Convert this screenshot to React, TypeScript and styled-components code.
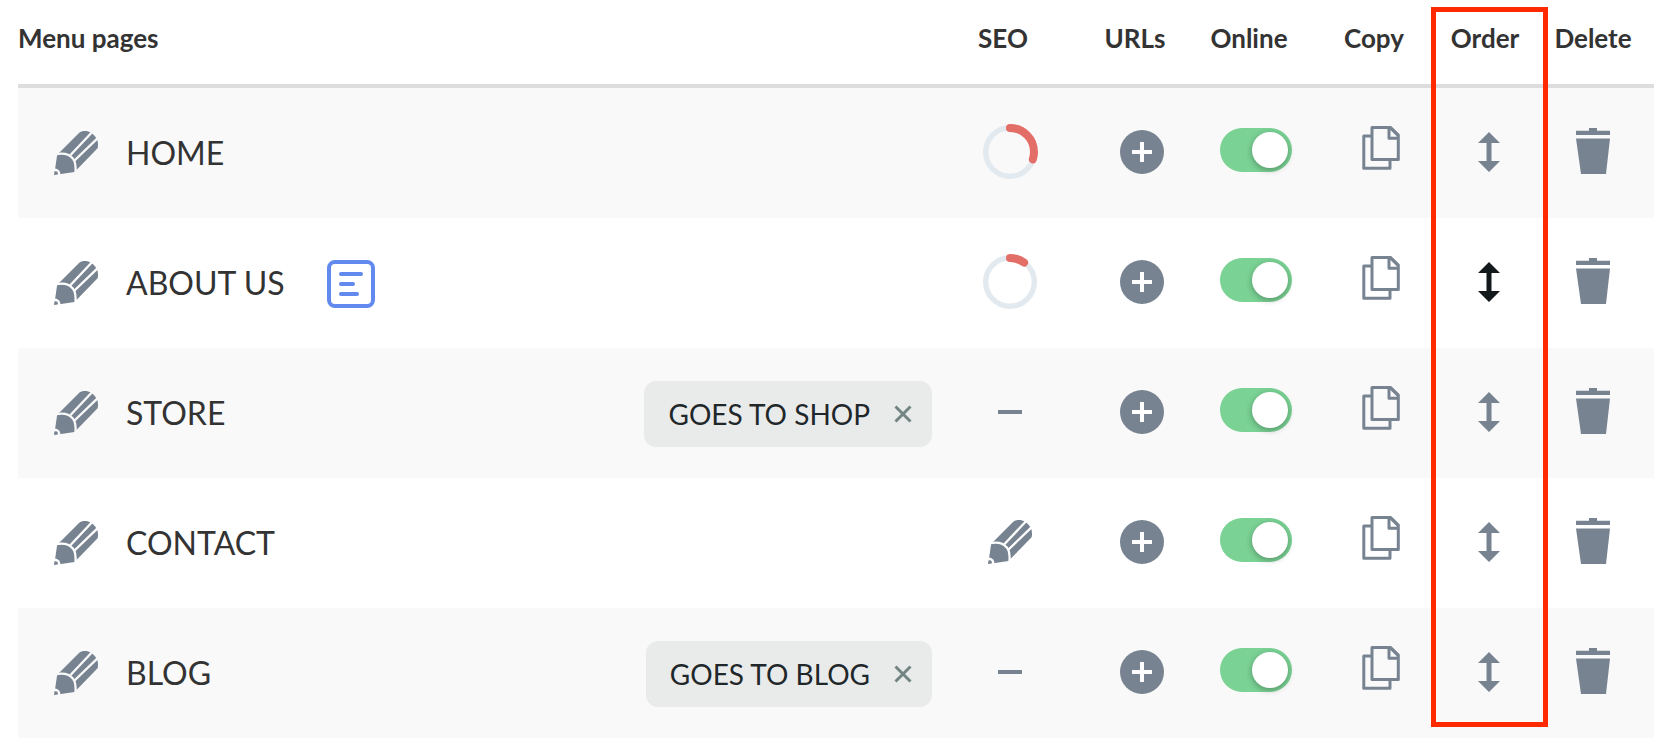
import React, { useId } from "react";
import styled, { createGlobalStyle } from "styled-components";

const GlobalStyle = createGlobalStyle`
  *, *::before, *::after { box-sizing: border-box; }
  body {
    margin: 0;
    background: #fff;
    color: #333;
    font-family: Lato, "Open Sans", sans-serif;
  }
`;

const SLATE = "#788391";

const Page = styled.main`
  padding: 0 16px 18px 18px;
`;

const TableWrap = styled.div`
  position: relative;
`;

const Table = styled.table`
  width: 100%;
  table-layout: fixed;
  border-collapse: separate;
  border-spacing: 0;
`;

const Col = styled.col<{ $width?: number }>`
  width: ${(p) => (p.$width ? `${p.$width}px` : "auto")};
`;

const HeadCell = styled.th<{ $align?: "left" | "center"; $inset?: number }>`
  height: 88px;
  padding: 0 ${(p) => p.$inset ?? 0}px 8px 0;
  border-bottom: 4px solid #ddd;
  font-size: 26px;
  line-height: 32px;
  font-weight: 700;
  text-align: ${(p) => p.$align ?? "center"};
  white-space: nowrap;
`;

const Row = styled.tr`
  &:nth-child(odd) {
    background: #f9f9f9;
  }
`;

const NameCell = styled.td`
  height: 130px;
  padding: 0 0 0 36px;
`;

const NameLine = styled.div`
  display: flex;
  align-items: center;
`;

const PageName = styled.span`
  margin-left: 28px;
  font-size: 32px;
  line-height: 40px;
  white-space: nowrap;
`;

const PageType = styled.span`
  display: flex;
  margin: 2px 0 0 42px;
`;

const Tag = styled.span`
  display: flex;
  align-items: center;
  gap: 24px;
  height: 66px;
  margin: 2px 0 0 auto;
  padding: 0 20px 0 24px;
  border-radius: 12px;
  background: #e9ebea;
  color: #1f272b;
  font-size: 28px;
  line-height: 36px;
  white-space: nowrap;
`;

const ControlCell = styled.td<{ $lift?: number }>`
  padding: 0 0 ${(p) => p.$lift ?? 2}px;
  vertical-align: middle;
`;

const Centered = styled.div`
  display: flex;
  justify-content: center;
`;

const IconButton = styled.button<{ $tone?: string }>`
  display: flex;
  flex: none;
  padding: 0;
  border: 0;
  background: none;
  color: ${(p) => p.$tone ?? SLATE};
  cursor: pointer;
`;

const Switch = styled.input`
  appearance: none;
  display: flex;
  align-items: center;
  width: 72px;
  height: 44px;
  margin: 0;
  padding: 4px;
  border-radius: 22px;
  background: #ccd2d8;
  cursor: pointer;

  &::before {
    content: "";
    width: 36px;
    height: 36px;
    border-radius: 50%;
    background: #fff;
    box-shadow: 0 2px 6px rgba(0, 0, 0, 0.3);
  }

  &:checked {
    justify-content: flex-end;
    background: #7ad294;
  }
`;

const Dash = styled.div`
  width: 24px;
  height: 4px;
  background: ${SLATE};
`;

const ColumnHighlight = styled.div`
  position: absolute;
  top: 7px;
  right: 106px;
  bottom: 11px;
  width: 117px;
  border: 5px solid #ff2a00;
  pointer-events: none;
`;

function PencilIcon() {
  const id = useId();
  return (
    <svg width="44" height="44" viewBox="0 0 44 44" aria-hidden="true">
      <mask id={id} maskUnits="userSpaceOnUse" x="0" y="0" width="44" height="44">
        <rect width="44" height="44" fill="#fff" />
        <g fill="none" stroke="#000" strokeWidth="2.3">
          <path d="M2 23.2 C10 21.6 15.6 23.6 18.8 27.4 C21.6 31 22.2 35 21.4 43" />
          <path d="M16.3 24.3 L38 1.2" />
          <path d="M20 30 L44.5 6.3" />
        </g>
        <circle cx="1" cy="43" r="5.4" fill="#000" />
      </mask>
      <path
        mask={`url(#${id})`}
        fill="currentColor"
        d="M0.5 42 L3.2 23.5 L5.5 21.4 L25 2 C28 -0.6 33.5 -0.5 37 1.7 C40 3.6 42 6 43.3 9 C44.2 12 44.2 15 43.6 17.3 L22 39.4 L20.5 41 L2 43.8 Z"
      />
      <path fill="currentColor" d="M0 44 L0.4 40.6 Q2 39.6 3.3 40.8 Q4.4 42.2 3.7 43.6 Z" />
    </svg>
  );
}

function TextPageIcon() {
  return (
    <svg width="48" height="48" viewBox="0 0 48 48" fill="none" stroke="#6289ee" strokeWidth="4" strokeLinecap="round" aria-hidden="true">
      <rect x="2" y="2" width="44" height="44" rx="6" />
      <path d="M14 14H34M14 24H26M14 34H30" />
    </svg>
  );
}

function ScoreRing({ percent }: { percent: number }) {
  return (
    <svg width="56" height="56" viewBox="0 0 56 56" fill="none" role="img" aria-label={`SEO score ${percent}%`}>
      <circle cx="28" cy="28" r="24.3" stroke="#e2e9ef" strokeWidth="5.4" />
      <circle
        cx="28"
        cy="28"
        r="24"
        stroke="#e36d67"
        strokeWidth="8"
        strokeLinecap="round"
        pathLength="100"
        strokeDasharray={`${percent} 100`}
        transform="rotate(-90 28 28)"
      />
    </svg>
  );
}

function PlusIcon() {
  return (
    <svg width="44" height="44" viewBox="0 0 44 44" aria-hidden="true">
      <circle cx="22" cy="22" r="22" fill="currentColor" />
      <path d="M22 12V32M12 22H32" stroke="#fff" strokeWidth="4" />
    </svg>
  );
}

function CopyIcon() {
  return (
    <svg width="38" height="44" viewBox="0 0 38 44" fill="none" stroke="currentColor" strokeWidth="3" strokeLinejoin="round" aria-hidden="true">
      <path d="M9.5 10H1.8V42.3H28V34.5" />
      <path d="M10 1.5H28.6L36.3 9V33.4H10Z" />
      <path d="M27 1.5V12.2H36.3" />
      <path d="M28 1.5L36.3 9.8" />
    </svg>
  );
}

function MoveIcon() {
  return (
    <svg width="22" height="40" viewBox="0 0 22 40" fill="currentColor" aria-hidden="true">
      <path d="M11 0L22 11H13.5V29H22L11 40L0 29H8.5V11H0Z" />
    </svg>
  );
}

function TrashIcon() {
  return (
    <svg width="34" height="46" viewBox="0 0 34 46" fill="currentColor" aria-hidden="true">
      <path d="M0 2.7H13V0H21V2.7H34V7H0Z" />
      <path d="M0 10.4H34L30 46H5Z" />
    </svg>
  );
}

function CloseIcon() {
  return (
    <svg width="18" height="18" viewBox="0 0 18 18" stroke="currentColor" strokeWidth="3" aria-hidden="true">
      <path d="M1.5 1.5L16.5 16.5M16.5 1.5L1.5 16.5" />
    </svg>
  );
}

type Seo = number | "none" | "edit";

interface MenuPage {
  name: string;
  seo: Seo;
  target?: string;
  isText?: boolean;
  moving?: boolean;
}

const pages: MenuPage[] = [
  { name: "HOME", seo: 30 },
  { name: "ABOUT US", seo: 10, isText: true, moving: true },
  { name: "STORE", seo: "none", target: "GOES TO SHOP" },
  { name: "CONTACT", seo: "edit" },
  { name: "BLOG", seo: "none", target: "GOES TO BLOG" },
];

function SeoStatus({ seo, name }: { seo: Seo; name: string }) {
  if (seo === "none") return <Dash />;
  if (seo === "edit") {
    return (
      <IconButton aria-label={`Edit SEO of ${name}`}>
        <PencilIcon />
      </IconButton>
    );
  }
  return <ScoreRing percent={seo} />;
}

function PageRow({ page }: { page: MenuPage }) {
  const { name } = page;
  return (
    <Row>
      <NameCell>
        <NameLine>
          <IconButton aria-label={`Edit ${name}`}>
            <PencilIcon />
          </IconButton>
          <PageName>{name}</PageName>
          {page.isText && (
            <PageType>
              <TextPageIcon />
            </PageType>
          )}
          {page.target && (
            <Tag>
              {page.target}
              <IconButton $tone="#728583" aria-label={`Remove ${page.target}`}>
                <CloseIcon />
              </IconButton>
            </Tag>
          )}
        </NameLine>
      </NameCell>
      <ControlCell>
        <Centered>
          <SeoStatus seo={page.seo} name={name} />
        </Centered>
      </ControlCell>
      <ControlCell>
        <Centered>
          <IconButton aria-label={`Add URL to ${name}`}>
            <PlusIcon />
          </IconButton>
        </Centered>
      </ControlCell>
      <ControlCell $lift={6}>
        <Centered>
          <Switch type="checkbox" defaultChecked aria-label={`${name} online`} />
        </Centered>
      </ControlCell>
      <ControlCell $lift={10}>
        <Centered>
          <IconButton aria-label={`Copy ${name}`}>
            <CopyIcon />
          </IconButton>
        </Centered>
      </ControlCell>
      <ControlCell>
        <Centered>
          <IconButton $tone={page.moving ? "#13181b" : SLATE} aria-label={`Move ${name}`}>
            <MoveIcon />
          </IconButton>
        </Centered>
      </ControlCell>
      <ControlCell $lift={4}>
        <Centered>
          <IconButton aria-label={`Delete ${name}`}>
            <TrashIcon />
          </IconButton>
        </Centered>
      </ControlCell>
    </Row>
  );
}

export default function App() {
  return (
    <Page>
      <GlobalStyle />
      <TableWrap>
        <Table>
          <colgroup>
            <Col />
            <Col $width={156} />
            <Col $width={108} />
            <Col $width={120} />
            <Col $width={130} />
            <Col $width={86} />
            <Col $width={122} />
          </colgroup>
          <thead>
            <tr>
              <HeadCell scope="col" $align="left">Menu pages</HeadCell>
              <HeadCell scope="col" $inset={14}>SEO</HeadCell>
              <HeadCell scope="col" $inset={14}>URLs</HeadCell>
              <HeadCell scope="col" $inset={14}>Online</HeadCell>
              <HeadCell scope="col" $inset={14}>Copy</HeadCell>
              <HeadCell scope="col" $inset={8}>Order</HeadCell>
              <HeadCell scope="col">Delete</HeadCell>
            </tr>
          </thead>
          <tbody>
            {pages.map((page) => (
              <PageRow key={page.name} page={page} />
            ))}
          </tbody>
        </Table>
        <ColumnHighlight />
      </TableWrap>
    </Page>
  );
}
